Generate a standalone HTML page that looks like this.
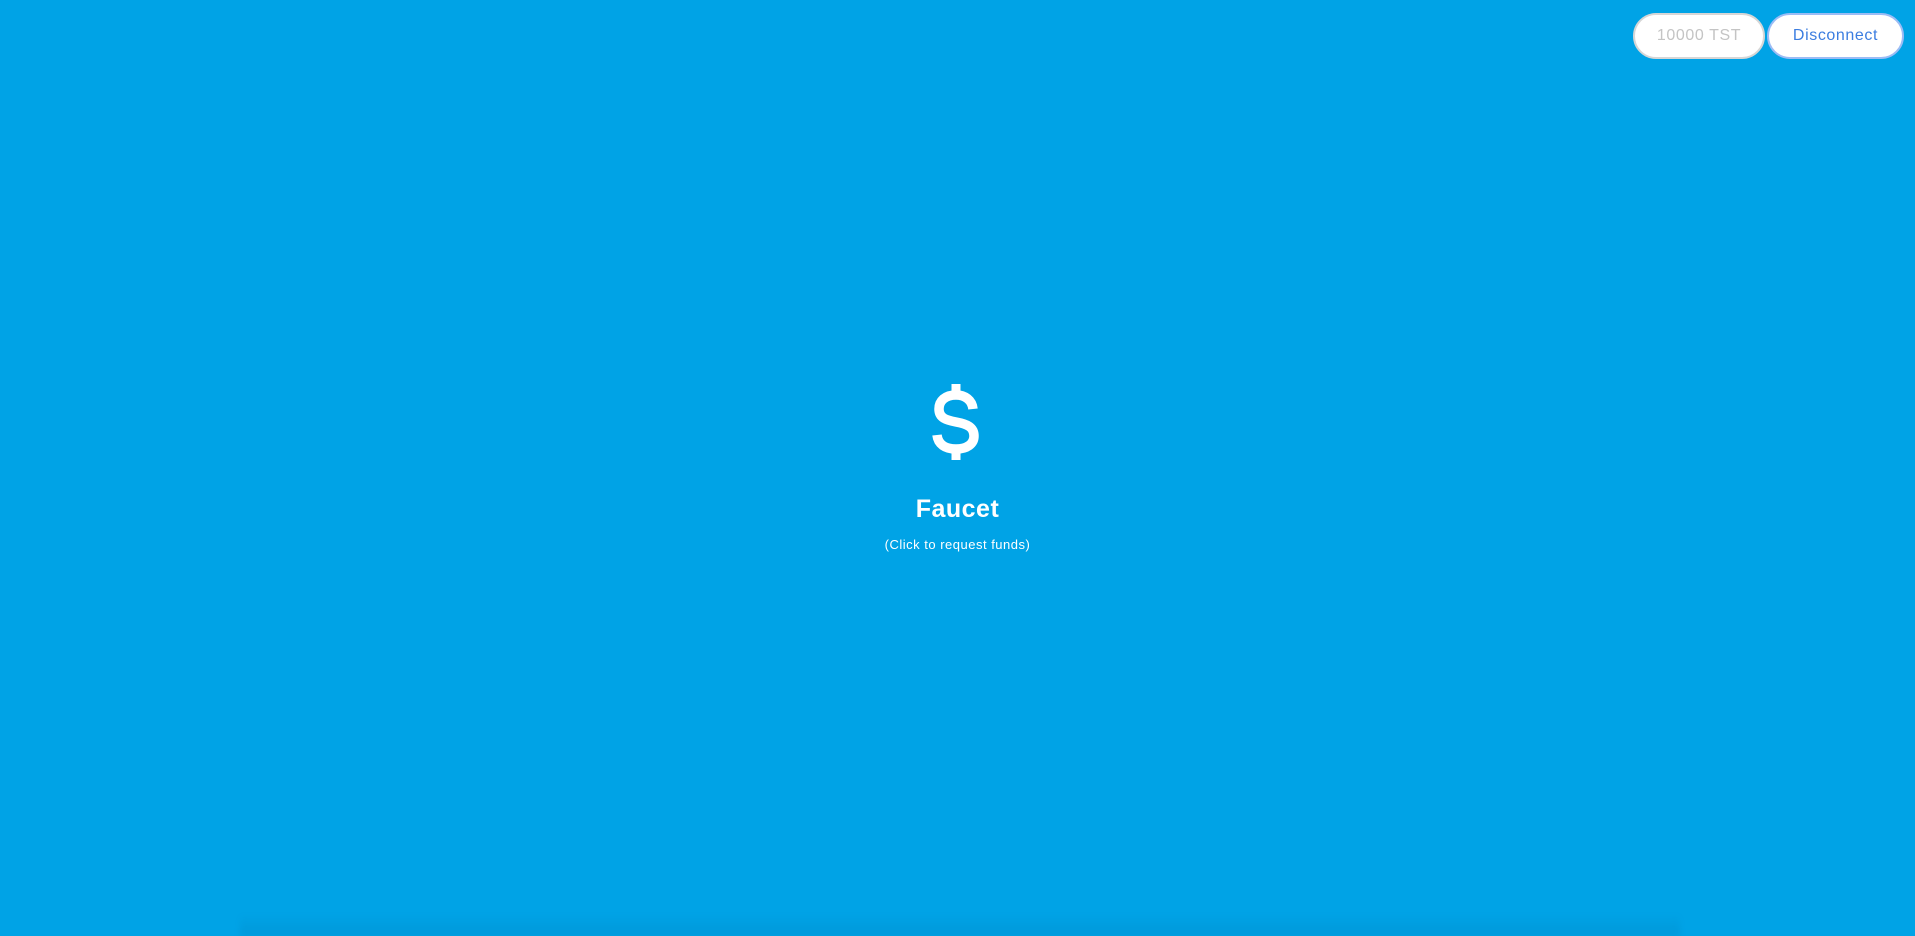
<!DOCTYPE html>
<html><head><meta charset="utf-8"><style>
html,body{margin:0;padding:0;width:1915px;height:936px;overflow:hidden;background:#00a3e6;font-family:"Liberation Sans",sans-serif;position:relative}
.btn{position:absolute;top:13px;height:46px;box-sizing:border-box;background:#fff;border-radius:23px;display:flex;align-items:center;justify-content:center;font-size:16px;letter-spacing:0.6px}
.b1{left:1633px;width:132px;border:2px solid #d6d6d6;color:#c4c4c4}
.b2{left:1767px;width:137px;border:2px solid #9bbcf5;color:#3b7de0}
.shadow{position:absolute;left:240px;width:1440px;bottom:0;height:22px;background:linear-gradient(to bottom,rgba(0,80,130,0),rgba(0,80,130,0.12));filter:blur(3px)}
.title{position:absolute;left:0;width:1915px;text-align:center;color:#fff}
</style></head><body>
<div class="btn b1">10000 TST</div>
<div class="btn b2">Disconnect</div>
<svg style="position:absolute;left:930px;top:382px" width="52" height="80" viewBox="0 0 52 80">
<path d="M26 2 V14 M26 66 V78" stroke="#fff" stroke-width="9" fill="none"/>
<path d="M43 27 C42 18 35 13 26 13 C15 13 9 19 9 27 C9 36 16 38 26 40 C37 42 44 45 44 54 C44 62 37 67 26 67 C15 67 8 62 7 53" stroke="#fff" stroke-width="9.5" fill="none"/>
</svg>
<div class="title" style="top:495px;font-size:25px;font-weight:bold;letter-spacing:0.5px">Faucet</div>
<div class="title" style="top:537px;font-size:13px;letter-spacing:0.5px">(Click to request funds)</div>
<div class="shadow"></div>
</body></html>
